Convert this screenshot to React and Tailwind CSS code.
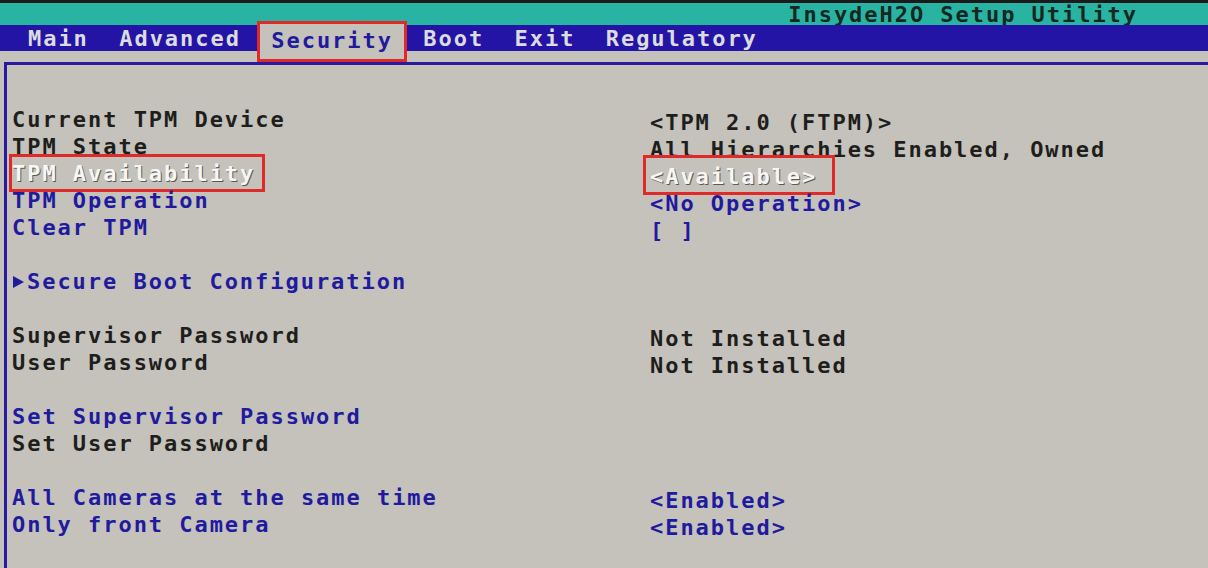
import React from 'react';

const font = { fontFamily: '"DejaVu Sans Mono", "Liberation Mono", monospace' };

const rows = [
  { label: 'Current TPM Device', value: '<TPM 2.0 (FTPM)>', tone: 'dark' },
  { label: 'TPM State', value: 'All Hierarchies Enabled, Owned', tone: 'dark' },
  { label: 'TPM Availability', value: '<Available>', tone: 'selected' },
  { label: 'TPM Operation', value: '<No Operation>', tone: 'blue' },
  { label: 'Clear TPM', value: '[ ]', tone: 'blue' },
  null,
  { label: 'Secure Boot Configuration', tone: 'blue', submenu: true },
  null,
  { label: 'Supervisor Password', value: 'Not Installed', tone: 'dark' },
  { label: 'User Password', value: 'Not Installed', tone: 'dark' },
  null,
  { label: 'Set Supervisor Password', tone: 'blue' },
  { label: 'Set User Password', tone: 'dark' },
  null,
  { label: 'All Cameras at the same time', value: '<Enabled>', tone: 'blue' },
  { label: 'Only front Camera', value: '<Enabled>', tone: 'blue' },
];

const toneClass = {
  dark: 'text-[#1e1e1c]',
  blue: 'text-[#211a9e]',
  selected: 'text-[#f6f6f4] [text-shadow:1px_1px_0_#5a5a54]',
};

const tabs = ['Main', 'Advanced', 'Security', 'Boot', 'Exit', 'Regulatory'];

const App = () => {
  return (
    <div
      className="w-[1208px] h-[568px] bg-[#c4c2bb] overflow-hidden flex flex-col text-[22px] font-bold tracking-[1.96px] leading-none"
      style={font}
    >
      <div className="h-[3px] bg-[#1a1a1a]" />
      <div className="h-[22px] bg-[#29b3a3] flex items-center justify-end pt-[1px] pr-[70px] text-[#14281f]">
        InsydeH2O Setup Utility
      </div>
      <div className="h-[26px] bg-[#2414a6] flex items-center pt-[2px] pl-[28px] gap-[30.4px]">
        {tabs.map((t) =>
          t === 'Security' ? (
            <span
              key={t}
              className="relative -mx-[13px] px-[13px] h-[35px] mt-[4px] flex items-center bg-[#c4c2bb] text-[#211a9e]"
            >
              {t}
              <span className="absolute -left-[1px] -right-[1px] -top-[3px] bottom-[-3px] border-[3px] border-[#e02a2a]" />
            </span>
          ) : (
            <span key={t} className="text-[#dcdcde]">
              {t}
            </span>
          )
        )}
      </div>
      <div className="h-[11px]" />
      <div className="flex-1 ml-[4px] border-t-[3px] border-l-[3px] border-[#2a1aa0] pt-[41px] pl-[5px]">
        {rows.map((r, i) =>
          r === null ? (
            <div key={i} className="h-[27px]" />
          ) : (
            <div key={i} className="h-[27px] grid grid-cols-[638px_1fr]">
              <div className={`flex items-center ${toneClass[r.tone]}`}>
                <span className="relative flex items-center">
                  {r.submenu && (
                    <svg width="15" height="14" viewBox="0 0 15 14">
                      <path d="M1 1 L12 7 L1 13 Z" fill="#211a9e" />
                    </svg>
                  )}
                  {r.label}
                  {r.tone === 'selected' && (
                    <span className="absolute -left-[3px] -right-[10px] -top-[9px] -bottom-[7px] border-[3px] border-[#e02a2a]" />
                  )}
                </span>
              </div>
              {r.value && (
                <div className={`flex items-center pt-[6px] ${toneClass[r.tone]}`}>
                  <span className="relative">
                    {r.value}
                    {r.tone === 'selected' && (
                      <span className="absolute -left-[7px] -right-[18px] -top-[11px] -bottom-[7px] border-[3px] border-[#e02a2a]" />
                    )}
                  </span>
                </div>
              )}
            </div>
          )
        )}
      </div>
    </div>
  );
};

export default App;
